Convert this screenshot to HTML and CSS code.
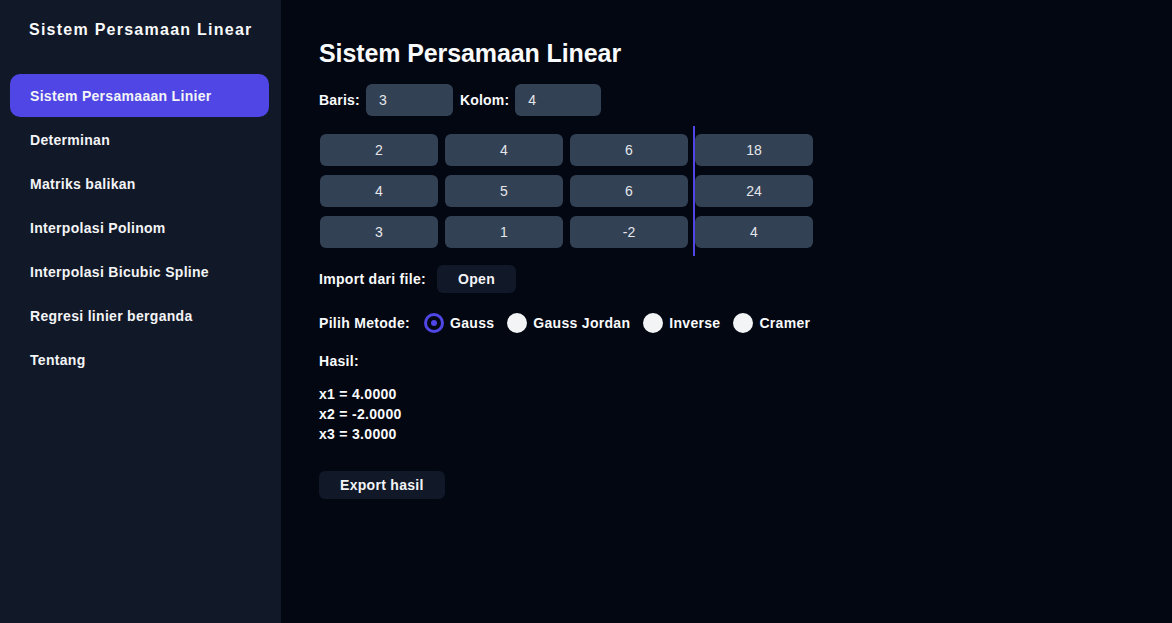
FILE: index.html
```html
<!DOCTYPE html>
<html lang="id">
<head>
<meta charset="utf-8">
<title>Sistem Persamaan Linear</title>
<link rel="stylesheet" href="styles.css">
</head>
<body>
<div class="app">
  <aside class="sidebar">
    <div class="brand">Sistem Persamaan Linear</div>
    <nav class="nav">
      <a class="nav-item active">Sistem Persamaaan Linier</a>
      <a class="nav-item">Determinan</a>
      <a class="nav-item">Matriks balikan</a>
      <a class="nav-item">Interpolasi Polinom</a>
      <a class="nav-item">Interpolasi Bicubic Spline</a>
      <a class="nav-item">Regresi linier berganda</a>
      <a class="nav-item">Tentang</a>
    </nav>
  </aside>
  <main class="main">
    <h1 class="title">Sistem Persamaan Linear</h1>
    <div class="size-row">
      <span class="label">Baris:</span>
      <div class="input">3</div>
      <span class="label">Kolom:</span>
      <div class="input">4</div>
    </div>
    <div class="matrix">
      <div class="coef">
        <div class="cell">2</div><div class="cell">4</div><div class="cell">6</div>
        <div class="cell">4</div><div class="cell">5</div><div class="cell">6</div>
        <div class="cell">3</div><div class="cell">1</div><div class="cell">-2</div>
      </div>
      <div class="const">
        <div class="cell">18</div>
        <div class="cell">24</div>
        <div class="cell">4</div>
      </div>
    </div>
    <div class="import-row">
      <span class="label">Import dari file:</span>
      <button class="btn">Open</button>
    </div>
    <div class="method-row">
      <span class="label">Pilih Metode:</span>
      <label class="radio"><span class="dot checked"></span>Gauss</label>
      <label class="radio"><span class="dot"></span>Gauss Jordan</label>
      <label class="radio"><span class="dot"></span>Inverse</label>
      <label class="radio"><span class="dot"></span>Cramer</label>
    </div>
    <div class="result-title">Hasil:</div>
    <div class="result">
      <div>x1 = 4.0000</div>
      <div>x2 = -2.0000</div>
      <div>x3 = 3.0000</div>
    </div>
    <button class="btn export">Export hasil</button>
  </main>
</div>
</body>
</html>
```

FILE: styles.css
```css
* { box-sizing: border-box; }
html, body { margin: 0; padding: 0; height: 100%; }
body {
  font-family: "Liberation Sans", Arial, sans-serif;
  background: #030712;
  color: #f9fafb;
}
.app { display: flex; height: 623px; }
.sidebar {
  width: 281px;
  flex: none;
  background: #111827;
  padding: 20px 12px 0 10px;
}
.brand {
  font-size: 16px;
  font-weight: 700;
  letter-spacing: 1.25px;
  line-height: 20px;
  padding-left: 19px;
  margin-bottom: 34px;
}
.nav { display: flex; flex-direction: column; }
.nav-item {
  display: flex;
  align-items: center;
  height: 44px;
  padding-left: 20px;
  font-size: 14px;
  font-weight: 700;
  letter-spacing: 0.3px;
  color: #f3f4f6;
  border-radius: 10px;
}
.nav-item.active { background: #4f46e5; height: 43px; margin-bottom: 1px; }
.main {
  flex: 1;
  padding: 38px 0 0 38px;
  display: flex;
  flex-direction: column;
  align-items: flex-start;
}
.title {
  margin: 0;
  font-size: 25px;
  line-height: 30px;
  font-weight: 700;
  letter-spacing: -0.1px;
}
.label { font-size: 14px; font-weight: 700; letter-spacing: 0.3px; }
.size-row {
  display: flex;
  align-items: center;
  margin-top: 16px;
}
.size-row .label { letter-spacing: 0.2px; }
.input {
  width: 87px;
  height: 32px;
  background: #334155;
  border-radius: 6px;
  font-size: 14px;
  line-height: 32px;
  padding-left: 13px;
  color: #e5e7eb;
  margin: 0 7px 0 6px;
}
.size-row .input:last-child { width: 86px; margin-left: 6px; }
.matrix {
  display: flex;
  margin-top: 10px;
  margin-left: 1px;
}
.coef {
  display: grid;
  grid-template-columns: repeat(3, 118px);
  grid-auto-rows: 32px;
  column-gap: 7px;
  row-gap: 9px;
  padding: 8px 0;
  margin-right: 5px;
}
.const {
  display: grid;
  grid-template-columns: 118px;
  grid-auto-rows: 32px;
  row-gap: 9px;
  padding: 8px 0;
  border-left: 2px solid #4f46e5;
}
.cell {
  background: #334155;
  border-radius: 6px;
  display: flex;
  align-items: center;
  justify-content: center;
  font-size: 14px;
  color: #e5e7eb;
}
.import-row {
  display: flex;
  align-items: center;
  margin-top: 9px;
  gap: 11px;
}
.btn {
  font-family: inherit;
  font-size: 14px;
  font-weight: 700;
  letter-spacing: 0.3px;
  color: #f3f4f6;
  background: #111827;
  border: none;
  border-radius: 6px;
  height: 28px;
  padding: 0 21px;
}
.method-row {
  display: flex;
  align-items: center;
  margin-top: 20px;
}
.method-row .label { margin-right: 14px; }
.radio {
  display: flex;
  align-items: center;
  font-size: 14px;
  font-weight: 700;
  letter-spacing: 0.3px;
  margin-right: 13px;
}
.dot {
  width: 20px;
  height: 20px;
  border-radius: 50%;
  background: #f3f4f6;
  margin-right: 6px;
  flex: none;
}
.dot.checked {
  background: #030712;
  border: 3px solid #4f46e5;
  position: relative;
}
.dot.checked::after {
  content: "";
  position: absolute;
  left: 4px; top: 4px;
  width: 6px; height: 6px;
  border-radius: 50%;
  background: #4f46e5;
}
.result-title {
  font-size: 14px;
  font-weight: 700;
  letter-spacing: 0.3px;
  margin-top: 19px;
  line-height: 18px;
}
.result {
  margin-top: 14px;
  font-size: 14px;
  font-weight: 700;
  letter-spacing: 0.3px;
  line-height: 20px;
}
.export { margin-top: 27px; }
```
